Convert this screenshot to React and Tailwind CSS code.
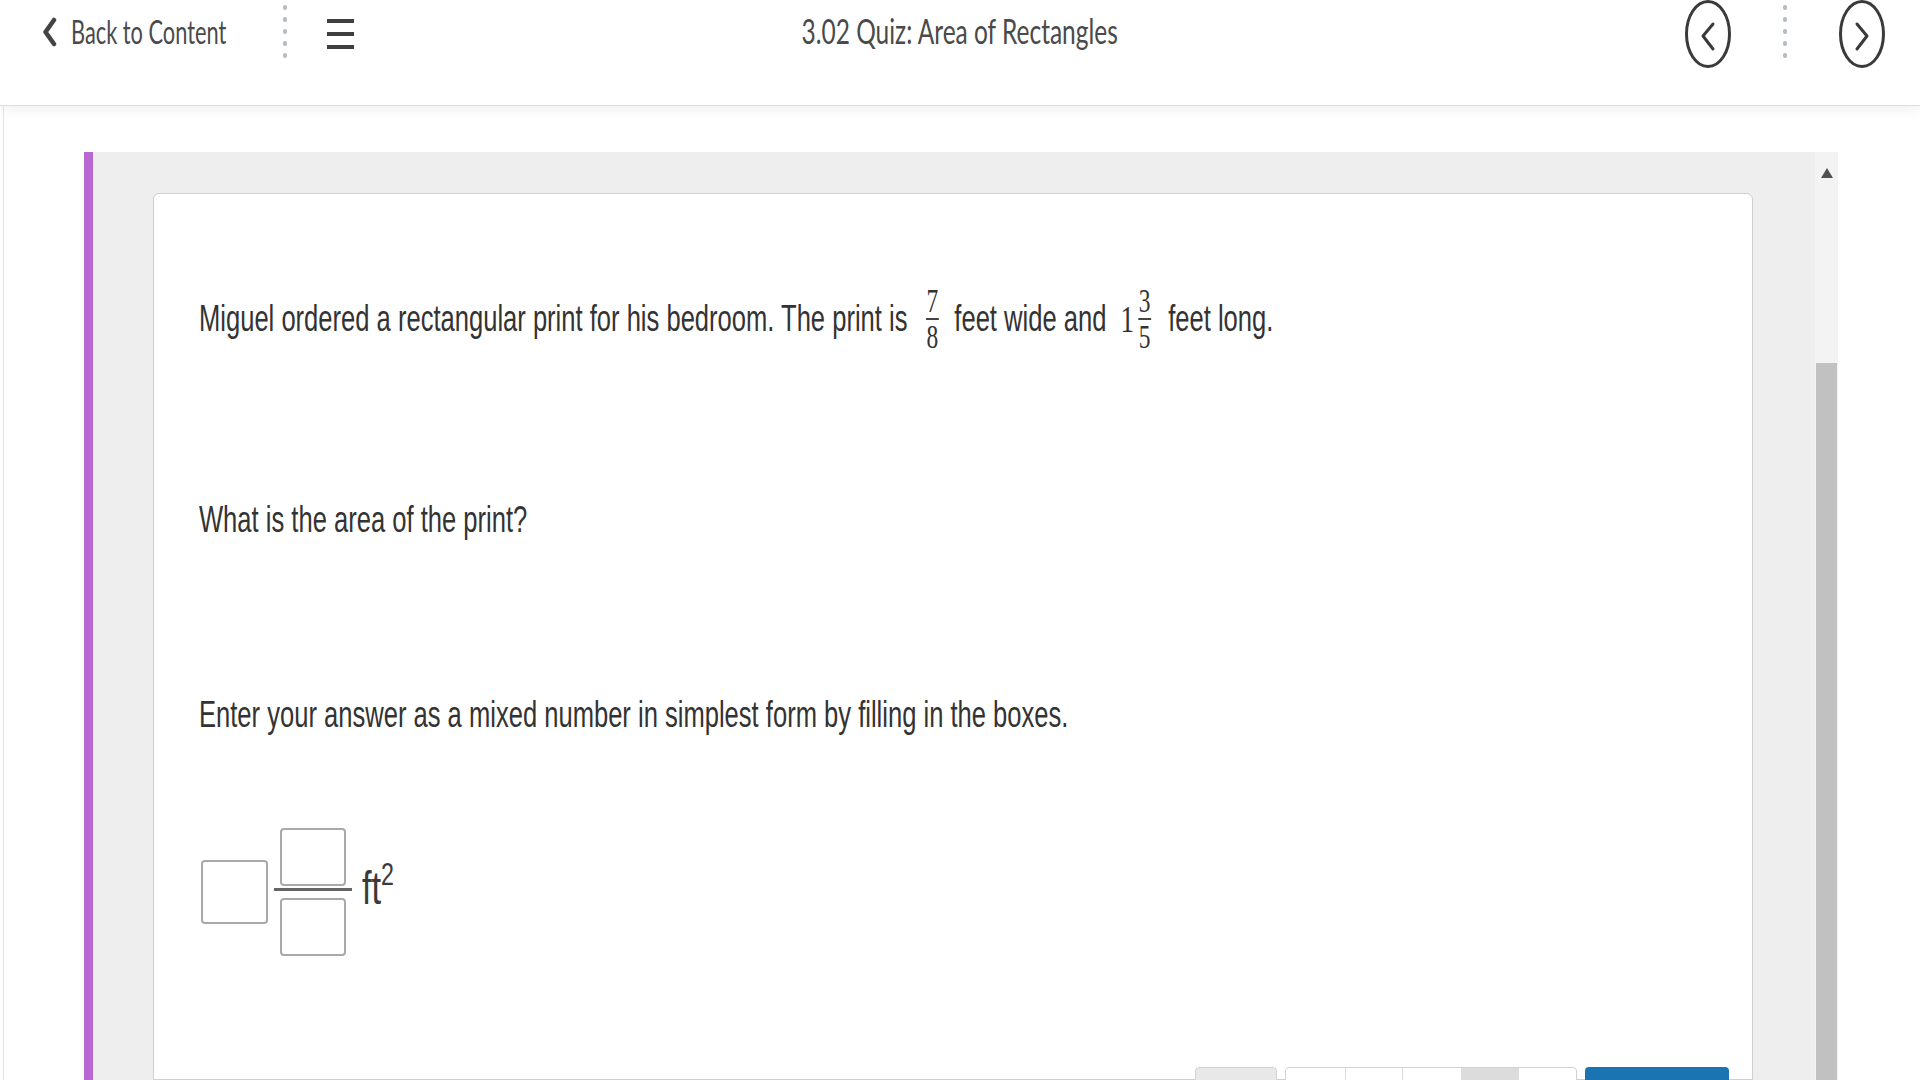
import React from 'react';

const Dots = () => (
  <div className="flex flex-col gap-[7px] py-[5px]">
    {[0, 1, 2, 3, 4].map((i) => (
      <span key={i} className="block w-[4px] h-[5px] rounded-full bg-[#b3bcc2]" />
    ))}
  </div>
);

const CircleArrow = ({ dir }) => (
  <svg width="48" height="70" viewBox="0 0 48 70">
    <ellipse cx="24" cy="34" rx="21.5" ry="32.5" fill="none" stroke="#3a3a3a" strokeWidth="3" />
    {dir === 'left' ? (
      <polyline points="29,24 19,36 29,49" fill="none" stroke="#3a3a3a" strokeWidth="3" strokeLinecap="round" strokeLinejoin="round" />
    ) : (
      <polyline points="19,24 29,36 19,49" fill="none" stroke="#3a3a3a" strokeWidth="3" strokeLinecap="round" strokeLinejoin="round" />
    )}
  </svg>
);

// stacked fraction, serif digits like the math renderer
const Frac = ({ n, d, className }) => (
  <span className={`inline-flex flex-col items-center font-['Liberation_Serif',serif] text-[33px] leading-[28px] text-[#333] ${className}`}>
    <span>{n}</span>
    <span className="block w-[18px] h-[2px] bg-[#444] my-[3px]" />
    <span>{d}</span>
  </span>
);

const App = () => {
  return (
    <div className="w-[1920px] h-[1080px] overflow-hidden bg-white flex flex-col">
      <header className="h-[106px] shrink-0 bg-white border-b border-[#dedede] shadow-[0_3px_14px_rgba(0,0,0,0.07)] relative z-10">
        <div className="h-[66px] flex items-center relative">
          <div className="flex items-center pl-[42px] -mt-[3px]">
            <svg width="15" height="30" viewBox="0 0 15 30">
              <polyline points="12,3 3.5,15 12,27" fill="none" stroke="#444" strokeWidth="4.5" strokeLinecap="round" strokeLinejoin="round" />
            </svg>
            <span className="ml-[14px] font-['Lato',sans-serif] text-[33px] text-[#4a4a4a] inline-block origin-left scale-x-[0.66] whitespace-nowrap">Back to Content</span>
          </div>
          <div className="absolute left-[283px] top-0">
            <Dots />
          </div>
          <div className="absolute left-[327px] top-[19px] flex flex-col gap-[9px]">
            <span className="block w-[27px] h-[4px] bg-[#3f3f3f]" />
            <span className="block w-[27px] h-[4px] bg-[#3f3f3f]" />
            <span className="block w-[27px] h-[4px] bg-[#3f3f3f]" />
          </div>
          <div className="absolute inset-x-0 top-0 h-[60px] flex items-center justify-center pointer-events-none">
            <span className="font-['Lato',sans-serif] text-[34px] text-[#4a4a4a] inline-block origin-center scale-x-[0.72] whitespace-nowrap">3.02 Quiz: Area of Rectangles</span>
          </div>
          <div className="absolute left-[1684px] top-0 flex items-start">
            <CircleArrow dir="left" />
            <div className="ml-[51px]">
              <Dots />
            </div>
            <div className="ml-[51px]">
              <CircleArrow dir="right" />
            </div>
          </div>
        </div>
      </header>

      <main className="flex-1 min-h-0 ml-[3px] border-l border-[#e3e6ea] pl-[80px] pt-[46px] flex">
        <div className="w-[9px] bg-[#b968d2] shrink-0" />
        <div className="w-[1745px] bg-[#eeeeee] flex">
          <div className="flex-1 pl-[60px] pt-[41px] flex">
            <div className="w-[1600px] bg-white border border-[#cfcfcf] rounded-t-[6px] pl-[45px] pt-[93px] flex flex-col font-['Liberation_Sans',Arial,sans-serif] text-[#333]">
              <div className="h-[64px] flex items-center">
                <div className="inline-flex items-center origin-left scale-x-[0.71] whitespace-nowrap text-[36px]">
                  <span>Miguel ordered a rectangular print for his bedroom. The print is</span>
                  <Frac n="7" d="8" className="ml-[26px] mr-[22px]" />
                  <span>feet wide and</span>
                  <span className="ml-[20px] font-['Liberation_Serif',serif] text-[38px]">1</span>
                  <Frac n="3" d="5" className="ml-[6px] mr-[24px]" />
                  <span>feet long.</span>
                </div>
              </div>
              <div className="h-[44px] mt-[147px] flex items-center">
                <span className="inline-block origin-left scale-x-[0.71] whitespace-nowrap text-[36px]">What is the area of the print?</span>
              </div>
              <div className="h-[44px] mt-[151px] flex items-center">
                <span className="inline-block origin-left scale-x-[0.71] whitespace-nowrap text-[36px]">Enter your answer as a mixed number in simplest form by filling in the boxes.</span>
              </div>
              <div className="mt-[92px] h-[126px] flex items-center">
                <div className="w-[67px] h-[64px] border-2 border-[#a9a9a9] rounded-[4px] bg-white ml-[2px]" />
                <div className="flex flex-col items-center ml-[6px]">
                  <div className="w-[66px] h-[58px] border-2 border-[#a9a9a9] rounded-[4px] bg-white" />
                  <div className="w-[78px] h-[3px] bg-[#666] mt-[2px]" />
                  <div className="w-[66px] h-[58px] border-2 border-[#a9a9a9] rounded-[4px] bg-white mt-[7px]" />
                </div>
                <div className="ml-[10px] flex items-start text-[#3a3a3a] -mt-[8px]">
                  <span className="inline-block origin-left scale-x-[0.75] text-[46px] leading-[46px] -mr-[7px]">ft</span>
                  <span className="inline-block origin-left scale-x-[0.75] text-[31px] leading-[28px] -mt-[4px]">2</span>
                </div>
              </div>
              <div className="mt-[112px] flex justify-end pr-[23px]">
                <div className="w-[82px] h-[20px] bg-[#e8e8e8] border border-[#d2d2d2] rounded-t-[4px]" />
                <div className="ml-[8px] w-[292px] h-[20px] border border-[#d2d2d2] rounded-t-[4px] bg-white flex overflow-hidden">
                  <div className="w-[60px] border-r border-[#dcdcdc]" />
                  <div className="w-[57px] border-r border-[#dcdcdc]" />
                  <div className="w-[58px]" />
                  <div className="w-[58px] bg-[#dcdcdc]" />
                  <div className="flex-1" />
                </div>
                <div className="ml-[8px] w-[144px] h-[20px] bg-[#1a74b1] rounded-t-[4px]" />
              </div>
            </div>
          </div>
          <div className="w-[23px] bg-[#f3f3f3] flex flex-col items-center">
            <div className="pt-[16px] h-[211px]">
              <svg width="12" height="10" viewBox="0 0 12 10">
                <polygon points="6,0 12,10 0,10" fill="#505050" />
              </svg>
            </div>
            <div className="w-[21px] flex-1 bg-[#c1c1c1]" />
          </div>
        </div>
      </main>
    </div>
  );
};

export default App;
